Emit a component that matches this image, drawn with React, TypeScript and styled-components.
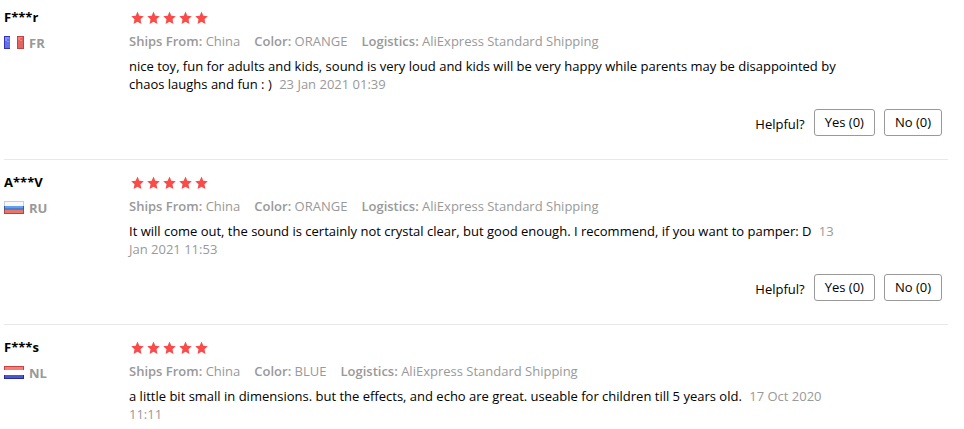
import React from "react";
import styled, { createGlobalStyle } from "styled-components";

const GlobalStyle = createGlobalStyle`
  * { box-sizing: border-box; }
  body {
    margin: 0;
    background: #fff;
    color: #000;
    font-family: "Open Sans", "Noto Sans", sans-serif;
    font-size: 13px;
    line-height: 18px;
  }
`;

const ReviewList = styled.main`
  padding: 0 16px 0 4px;
`;

const ReviewItem = styled.article`
  display: grid;
  grid-template-columns: 125px minmax(0, 1fr);
  padding: 8px 0 23px;
  border-bottom: 1px solid #e8e8e8;

  & + & { padding-top: 13px; }

  &:last-child {
    padding-bottom: 0;
    border-bottom: 0;
  }
`;

const Reviewer = styled.div`
  display: flex;
  flex-direction: column;
  gap: 8px;
`;

const UserName = styled.span`
  font-weight: 700;
`;

const Country = styled.span`
  display: flex;
  align-items: flex-start;
  gap: 5px;
  color: #999;
  font-weight: 700;
`;

const FlagIcon = styled.svg`
  display: block;
  width: 20px;
  height: 13px;
  margin-top: 2px;
`;

const Feedback = styled.div`
  display: flex;
  flex-direction: column;
`;

const Stars = styled.div`
  display: flex;
  gap: 2px;
  height: 18px;
  padding: 3px 0 0 1px;
`;

const StarIcon = styled.svg`
  display: block;
  width: 14px;
  height: 14px;
  fill: #fa4b4b;
`;

const Details = styled.div`
  display: flex;
  flex-wrap: wrap;
  gap: 0 14px;
  margin-top: 6px;
  color: #999;
`;

const Label = styled.strong`
  font-weight: 600;
`;

const Message = styled.p`
  margin: 7px 106px 0 0;
`;

const PostedAt = styled.time`
  margin-left: 4px;
  color: #999;
`;

const Helpful = styled.div`
  display: flex;
  justify-content: flex-end;
  align-items: flex-start;
  gap: 9px;
  margin-top: 16px;
  padding-right: 6px;
`;

const HelpfulLabel = styled.span`
  padding-top: 6px;
`;

const VoteButton = styled.button`
  height: 27px;
  padding: 0 10px 2px;
  border: 1px solid #999;
  border-radius: 3px;
  background: #fff;
  color: #000;
  font: inherit;
  cursor: pointer;
`;

type CountryCode = "FR" | "RU" | "NL";

interface Review {
  user: string;
  country: CountryCode;
  color: string;
  message: string;
  date: string;
  votes: boolean;
}

const reviews: Review[] = [
  {
    user: "F***r",
    country: "FR",
    color: "ORANGE",
    message:
      "nice toy, fun for adults and kids, sound is very loud and kids will be very happy while parents may be disappointed by chaos laughs and fun : )",
    date: "23 Jan 2021 01:39",
    votes: true,
  },
  {
    user: "A***V",
    country: "RU",
    color: "ORANGE",
    message:
      "It will come out, the sound is certainly not crystal clear, but good enough. I recommend, if you want to pamper: D",
    date: "13 Jan 2021 11:53",
    votes: true,
  },
  {
    user: "F***s",
    country: "NL",
    color: "BLUE",
    message:
      "a little bit small in dimensions. but the effects, and echo are great. useable for children till 5 years old.",
    date: "17 Oct 2020 11:11",
    votes: false,
  },
];

function Flag({ country }: { country: CountryCode }) {
  return (
    <FlagIcon viewBox="0 0 20 13" aria-hidden="true" shapeRendering="crispEdges">
      {country === "FR" && (
        <>
          <path fill="#fff" d="M0 0h20v13H0z" />
          <path fill="#3035b8" d="M0 0h6v13H0z" />
          <path fill="#6470e8" d="M1 1h5v11H1z" />
          <path fill="#8490f4" d="M1 1h4v2H3v2H1zM3 5h2v1H3z" />
          <path fill="#c2433f" d="M13 0h7v13h-7z" />
          <path fill="#e46460" d="M14 1h5v11h-5z" />
          <path fill="#f08580" d="M14 1h4v1h-2v2h-2zM16 4h2v1h-2z" />
        </>
      )}
      {country === "RU" && (
        <>
          <path fill="#c9ced4" d="M0 0h20v5H0z" />
          <path fill="#f7f8fa" d="M1 1h18v4H1z" />
          <path fill="#2860ae" d="M0 5h20v4H0z" />
          <path fill="#659fe8" d="M1 5h18v2H1z" />
          <path fill="#4282d8" d="M1 7h18v2H1z" />
          <path fill="#b54740" d="M0 9h20v4H0z" />
          <path fill="#e87865" d="M1 9h18v3H1z" />
        </>
      )}
      {country === "NL" && (
        <>
          <path fill="#fff" d="M0 0h20v13H0z" />
          <path fill="#c8433f" d="M0 0h20v4H0z" />
          <path fill="#f37d78" d="M1 1h18v3H1z" />
          <path fill="#252c9e" d="M0 9h20v4H0z" />
          <path fill="#4c56cf" d="M1 9h18v3H1z" />
        </>
      )}
    </FlagIcon>
  );
}

function Rating() {
  return (
    <Stars role="img" aria-label="5 out of 5 stars">
      {[1, 2, 3, 4, 5].map((n) => (
        <StarIcon key={n} viewBox="0 0 14 14" aria-hidden="true">
          <path d="M7.5 .6 9.3 4.7 13.8 5.2 10.5 8.3 11.4 12.9 7.5 10.7 3.6 12.9 4.5 8.3 1.2 5.2 5.7 4.7Z" />
        </StarIcon>
      ))}
    </Stars>
  );
}

export default function App() {
  return (
    <>
      <GlobalStyle />
      <ReviewList>
        {reviews.map((review) => (
          <ReviewItem key={review.user}>
            <Reviewer>
              <UserName>{review.user}</UserName>
              <Country>
                <Flag country={review.country} />
                {review.country}
              </Country>
            </Reviewer>
            <Feedback>
              <Rating />
              <Details>
                <span><Label>Ships From:</Label> China</span>
                <span><Label>Color:</Label> {review.color}</span>
                <span><Label>Logistics:</Label> AliExpress Standard Shipping</span>
              </Details>
              <Message>
                {review.message} <PostedAt>{review.date}</PostedAt>
              </Message>
              {review.votes && (
                <Helpful>
                  <HelpfulLabel>Helpful?</HelpfulLabel>
                  <VoteButton type="button">Yes (0)</VoteButton>
                  <VoteButton type="button">No (0)</VoteButton>
                </Helpful>
              )}
            </Feedback>
          </ReviewItem>
        ))}
      </ReviewList>
    </>
  );
}
